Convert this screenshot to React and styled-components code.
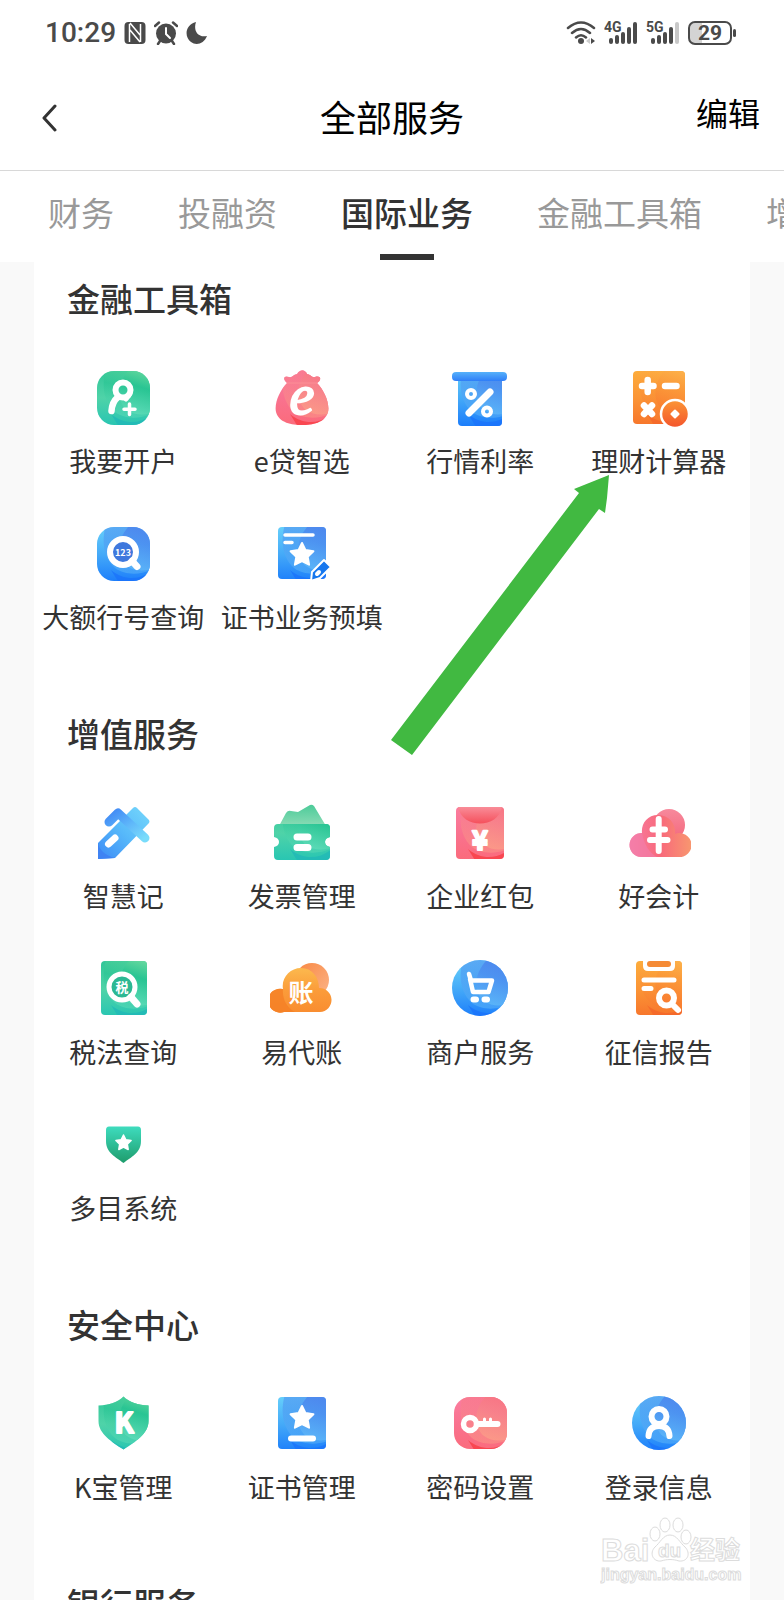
import React from 'react'
import styled, { createGlobalStyle } from 'styled-components'

const IconText = styled.text`
    fill: #fff;
    stroke: #fff;
    stroke-width: ${({ $thick }) => ($thick ? 2 : 0)}px;
    stroke-linejoin: round;
    font-family: ${({ $serif }) => ($serif ? '"Liberation Serif", serif' : '"Noto Sans CJK SC", sans-serif')};
    font-size: ${({ $size }) => $size}px;
    font-style: ${({ $serif }) => ($serif ? 'italic' : 'normal')};
    font-weight: ${({ $serif }) => ($serif ? 400 : 700)};
    text-anchor: middle;
`

const star = (cx, cy, r) =>
    Array.from({ length: 10 }, (_, i) => {
        const d = i % 2 ? r * 0.5 : r
        const a = (Math.PI / 5) * i - Math.PI / 2
        return `${(cx + d * Math.cos(a)).toFixed(1)},${(cy + d * Math.sin(a)).toFixed(1)}`
    }).join(' ')

function Fade({ id, stops, x1 = 0, y1 = 0, x2 = 0, y2 = 1 }) {
    return (
        <linearGradient id={id} x1={x1} y1={y1} x2={x2} y2={y2}>
            {stops.map((color, i) => (
                <stop key={i} offset={i / (stops.length - 1)} stopColor={color} />
            ))}
        </linearGradient>
    )
}

const tones = {
    green: { base: ['#2cc495', '#4fd3a8', '#22c3b4'], glow: ['#8fe6a6', '#25c391', '#5fdcb8'], low: '#20b6b8' },
    blue: { base: ['#6cd6fb', '#45aaf8', '#1677fb'], glow: ['#4a76ea', '#4c8ff0', '#5fb8f8'], low: '#1a70fb' },
    pink: { base: ['#fb7fa2', '#f9728f', '#fb6a78'], glow: ['#f86b7c', '#f7828a', '#fb9d88'], low: '#f8383f' },
    orange: { base: ['#fdb03c', '#fb9536', '#f6702a'], glow: ['#fdbe55', '#fb9a3a', '#f97b30'], low: '#f4642a' },
}

// Coloured body with the large glow circle and the darker lower corner
function Body({ id, tone, shape }) {
    const t = tones[tone]
    return (
        <>
            <defs>
                <Fade id={`${id}-base`} stops={t.base} />
                <Fade id={`${id}-glow`} stops={t.glow} x1={0.7} x2={0.5} />
                <clipPath id={`${id}-clip`}>{shape}</clipPath>
            </defs>
            <g clipPath={`url(#${id}-clip)`}>
                <rect width="64" height="64" fill={`url(#${id}-base)`} />
                <path d="M20 48C34 60 52 58 64 46V64H30Z" fill={t.low} opacity="0.7" />
                <path d="M18 -6C10 12 10 34 24 46C36 55 54 52 64 46V-6Z" fill={`url(#${id}-glow)`} opacity="0.5" />
                <path d="M42 0C26 14 24 34 36 44C44 50 56 49 64 46V-6Z" fill={`url(#${id}-glow)`} opacity="0.8" />
            </g>
        </>
    )
}

const Lines = ({ w = 6, children }) => (
    <g fill="none" stroke="#fff" strokeWidth={w} strokeLinecap="round" strokeLinejoin="round">
        {children}
    </g>
)

const shield = <path d="M32.5 4.5C38 10 47 13 57.5 13.5V29C57.5 42 44 50 32.5 57.5C21 50 7.5 42 7.5 29V13.5C18 13 27 10 32.5 4.5Z" />
const squircle = <rect x="6" y="5" width="53" height="54" rx="17" />
const paper = <rect x="8" y="5" width="48" height="52" rx="4" />

const icons = {
    account: (
        <>
            <Body id="account" tone="green" shape={squircle} />
            <Lines>
                <circle cx="32" cy="24" r="7.5" />
                <path d="M27 31Q21 36 20.5 45" strokeWidth="6.5" />
                <path d="M38 29L35 33" strokeWidth="5" />
                <path d="M38.5 38V48.5M33 43.3H44" strokeWidth="3.5" />
            </Lines>
        </>
    ),
    bag: (
        <>
            <Body
                id="bag"
                tone="pink"
                shape={<path d="M17 17C12 13 14 9 19 11C22 12 24 8 27 8C30 3 35 3 37 8C40 8 42 12 45 11C51 9 52 14 47 17C54 24 60 37 58 46C55 57 42 59 32 59C22 59 9 57 6 46C4 37 10 24 17 17Z" />}
            />
            <path d="M17 17H47" stroke="#fb8f96" strokeWidth="1" />
            <IconText x="32" y="48" $size={56} $serif $thick>e</IconText>
        </>
    ),
    rate: (
        <>
            <Body id="rate" tone="blue" shape={<rect x="10" y="11" width="44" height="49" rx="4" />} />
            <defs><Fade id="rate-bar" stops={['#56b1fa', '#2f7ef8']} /></defs>
            <rect x="4" y="6" width="55" height="9" rx="4" fill="url(#rate-bar)" />
            <Lines>
                <path d="M21 47L42 26" strokeWidth="7" />
                <circle cx="23" cy="28" r="4" strokeWidth="4" />
                <circle cx="39" cy="45.5" r="4" strokeWidth="4" />
            </Lines>
        </>
    ),
    calculator: (
        <>
            <Body id="calc" tone="orange" shape={<rect x="6" y="5" width="52" height="53" rx="4" />} />
            <Lines w={6.5}>
                <path d="M20.7 14V26M15 20H26.5M38 20H49.5M17 39.5L25 48M25 39.5L17 48" />
            </Lines>
            <defs><Fade id="calc-coin" stops={['#fb9636', '#f4542c']} /></defs>
            <circle cx="48" cy="48" r="14" fill="url(#calc-coin)" stroke="#fff" strokeWidth="2.5" />
            <rect x="44.5" y="44.5" width="7" height="7" rx="1" fill="#fff" transform="rotate(45 48 48)" />
        </>
    ),
    bankNo: (
        <>
            <Body id="bankno" tone="blue" shape={squircle} />
            <circle cx="32" cy="30" r="11" fill="#3f78dd" />
            <Lines>
                <circle cx="32" cy="30" r="13" />
                <path d="M41 39L46 44.5" strokeWidth="7" />
            </Lines>
            <IconText x="32" y="33.5" $size={9}>123</IconText>
        </>
    ),
    prefill: (
        <>
            <Body id="prefill" tone="blue" shape={paper} />
            <Lines w={3.5}>
                <path d="M15 13H43M15 20.5H22" />
            </Lines>
            <polygon points={star(32, 33, 12)} fill="#fff" stroke="#fff" strokeWidth="2" strokeLinejoin="round" />
            <path d="M41 59L42 50L54 38L61 45L50 56Z" fill="#1677ee" stroke="#fff" strokeWidth="2" strokeLinejoin="round" />
            <path d="M47 52L49 50" stroke="#fff" strokeWidth="4" strokeLinecap="round" />
        </>
    ),
    pen: (
        <>
            <defs>
                <Fade id="pen-body" stops={['#76d8fb', '#57b9fa', '#3c8af6']} x1={1} x2={0} />
                <Fade id="pen-bar" stops={['#428bf5', '#5eb6fa', '#79dcfb']} x2={1} />
            </defs>
            <path d="M7 58V42L42 7Q44 5 46 7L58 19Q59 21 58 22L24 57Z" fill="url(#pen-body)" />
            <path d="M18 21L27 12L54 37" fill="none" stroke="url(#pen-bar)" strokeWidth="9" strokeLinecap="round" strokeLinejoin="round" />
            <path d="M7 58V42Q9 53 24 57Z" fill="#3f83f3" />
            <Lines w={7}><path d="M17.5 43L24 37" /></Lines>
        </>
    ),
    invoice: (
        <>
            <defs><Fade id="inv-roof" stops={['#4ccb99', '#8adbb5']} /></defs>
            <path d="M9 25L16 12Q18 9 21 10L28 11L40 4Q42 3 44 5L56 25Z" fill="url(#inv-roof)" />
            <Body
                id="inv"
                tone="green"
                shape={<path d="M8 23H56Q60 23 60 27V36Q55 37 55 41Q55 45 60 46V55Q60 59 56 59H8Q4 59 4 55V46Q9 45 9 41Q9 37 4 36V27Q4 23 8 23Z" />}
            />
            <Lines w={7}><path d="M27 36H38M27 46.5H38" /></Lines>
        </>
    ),
    redPacket: (
        <>
            <Body id="packet" tone="pink" shape={<rect x="8" y="6" width="48" height="52" rx="4" />} />
            <defs><Fade id="packet-flap" stops={['#f98c98', '#f5505c']} /></defs>
            <path d="M10 6H54C50 28 14 28 10 6Z" fill="url(#packet-flap)" />
            <IconText x="32" y="49" $size={27} $thick>¥</IconText>
        </>
    ),
    ledger: (
        <>
            <defs>
                <Fade id="ledger-base" stops={['#f77da2', '#f8697b', '#f8976f']} x2={1} y2={0} />
                <Fade id="ledger-back" stops={['#f7899c', '#f4687c']} />
            </defs>
            <circle cx="42" cy="24" r="16" fill="url(#ledger-back)" />
            <path d="M14 56A12 12 0 1 1 15 32C14 23 20 14 31 14C43 14 49 24 48 33A12 12 0 1 1 51 56Z" fill="url(#ledger-base)" />
            <path d="M14 56A12 12 0 1 1 15 32C17 43 22 52 30 56Z" fill="#f27fae" opacity="0.6" />
            <Lines>
                <path d="M31.7 18V50M25.5 28.5H38M23 39H40.5" />
            </Lines>
        </>
    ),
    tax: (
        <>
            <Body id="tax" tone="green" shape={<rect x="10" y="4" width="46" height="54" rx="4" />} />
            <circle cx="31" cy="30" r="11" fill="#2cb893" />
            <Lines>
                <circle cx="31" cy="30" r="13" strokeWidth="5" />
                <path d="M40 40L46 47" strokeWidth="7" />
            </Lines>
            <IconText x="31" y="35" $size={13}>税</IconText>
        </>
    ),
    agent: (
        <>
            <defs>
                <Fade id="agent-base" stops={['#fcb94e', '#fb9c3a', '#f98d30']} />
                <Fade id="agent-back" stops={['#f98741', '#fbb58a']} x2={1} />
            </defs>
            <circle cx="42" cy="23" r="17" fill="url(#agent-back)" />
            <path d="M14 55A12 12 0 1 1 13 32C11 21 20 11 31 11C42 11 49 20 49 31A12 12 0 1 1 50 55Z" fill="url(#agent-base)" />
            <path d="M14 55A12 12 0 1 1 13 32C12 42 17 51 25 55Z" fill="#f58026" opacity="0.8" />
            <IconText x="31" y="45" $size={25}>账</IconText>
        </>
    ),
    cart: (
        <>
            <Body id="cart" tone="blue" shape={<circle cx="32" cy="31" r="28" />} />
            <Lines w={4.5}>
                <path d="M21 17L23 23.5H44L40.5 35H25L22 22" />
            </Lines>
            <Lines><path d="M25.5 42.5H28M36.5 42.5H39" /></Lines>
        </>
    ),
    credit: (
        <>
            <Body id="credit" tone="orange" shape={<rect x="9" y="4" width="46" height="54" rx="4" />} />
            <path d="M16 4V9Q16 14 21 14H43Q48 14 48 9V4Z" fill="#fff" />
            <rect x="20" y="4" width="24" height="6" rx="3" fill="#f58a35" />
            <Lines w={5}>
                <path d="M17 23H47M17 31.5H24" />
            </Lines>
            <Lines>
                <circle cx="39.5" cy="41" r="7.5" />
                <path d="M45 47L51 53" />
            </Lines>
        </>
    ),
    multi: (
        <>
            <defs><Fade id="multi-base" stops={['#3edcbe', '#1e9c6c']} /></defs>
            <path d="M18 13.5H47Q50 13.5 50 17V28C50 40 40 44 32.5 50C25 44 15 40 15 28V17Q15 13.5 18 13.5Z" fill="url(#multi-base)" />
            <polygon points={star(32.5, 30, 8)} fill="#fff" stroke="#fff" strokeWidth="1.5" strokeLinejoin="round" />
        </>
    ),
    kbao: (
        <>
            <Body id="kbao" tone="green" shape={shield} />
            <IconText x="33" y="41" $size={28} $thick>K</IconText>
        </>
    ),
    cert: (
        <>
            <Body id="cert" tone="blue" shape={paper} />
            <polygon points={star(32, 26, 12)} fill="#fff" stroke="#fff" strokeWidth="2" strokeLinejoin="round" />
            <Lines><path d="M21 46.5H43" /></Lines>
        </>
    ),
    password: (
        <>
            <Body id="pwd" tone="pink" shape={<rect x="6" y="5" width="53" height="52" rx="16" />} />
            <Lines>
                <circle cx="22" cy="32" r="6.5" strokeWidth="5.5" />
                <path d="M30 32H49.5" />
                <path d="M36.5 31V27M42.5 31V27" strokeWidth="3" />
            </Lines>
        </>
    ),
    login: (
        <>
            <Body id="login" tone="blue" shape={<circle cx="32" cy="31" r="27" />} />
            <Lines>
                <circle cx="32" cy="24.5" r="7.5" />
                <path d="M21.5 44Q22 34 32 34Q42 34 42.5 44" />
            </Lines>
        </>
    ),
}

const tabs = ['财务', '投融资', '国际业务', '金融工具箱', '增值服务']

const sections = [
    {
        title: '金融工具箱',
        items: [
            ['我要开户', 'account'],
            ['e贷智选', 'bag'],
            ['行情利率', 'rate'],
            ['理财计算器', 'calculator'],
            ['大额行号查询', 'bankNo'],
            ['证书业务预填', 'prefill'],
        ],
    },
    {
        title: '增值服务',
        items: [
            ['智慧记', 'pen'],
            ['发票管理', 'invoice'],
            ['企业红包', 'redPacket'],
            ['好会计', 'ledger'],
            ['税法查询', 'tax'],
            ['易代账', 'agent'],
            ['商户服务', 'cart'],
            ['征信报告', 'credit'],
            ['多目系统', 'multi'],
        ],
    },
    {
        title: '安全中心',
        items: [
            ['K宝管理', 'kbao'],
            ['证书管理', 'cert'],
            ['密码设置', 'password'],
            ['登录信息', 'login'],
        ],
    },
    { title: '银行服务', items: [] },
]

function Signal({ label, weak }) {
    return (
        <svg width="34" height="24" viewBox="0 0 34 24" fill="#4a4a4a">
            <SignalText x="0" y="11">{label}</SignalText>
            <rect x="5" y="17" width="4" height="6" rx="2" />
            <rect x="11" y="14" width="4" height="9" rx="2" />
            <rect x="17" y="11" width="4" height="12" rx="2" />
            <rect x="23" y="6" width="4" height="17" rx="2" />
            <rect x="29" y="1" width="4" height="22" rx="2" fill={weak ? '#c8c8c8' : '#4a4a4a'} />
        </svg>
    )
}

function StatusBar() {
    return (
        <Status>
            <StatusGroup>
                <Clock>10:29</Clock>
                <svg width="22" height="24" viewBox="0 0 22 24">
                    <rect x="0.5" y="1" width="21" height="22" rx="4" fill="#4a4a4a" />
                    <path d="M5.5 21V3M16.5 21V3M6 2L16 14M6 9L16 21" fill="none" stroke="#fff" strokeWidth="1.5" />
                </svg>
                <svg width="24" height="24" viewBox="0 0 24 24">
                    <circle cx="12" cy="12.5" r="10" fill="#4a4a4a" />
                    <path d="M1 5L5 1.5M23 5L19 1.5M4 23L6 20M20 23L18 20" stroke="#4a4a4a" strokeWidth="2.5" strokeLinecap="round" />
                    <path d="M12 7V13L16 17" fill="none" stroke="#fff" strokeWidth="2" strokeLinecap="round" />
                </svg>
                <svg width="22" height="24" viewBox="0 0 22 24">
                    <path d="M10 1C7 10 12 17 21 15C18 23 10 25 5 21C-2 16 -1 4 10 1Z" fill="#4a4a4a" />
                </svg>
            </StatusGroup>
            <StatusGroup>
                <svg width="30" height="24" viewBox="0 0 30 24">
                    <path d="M2 7Q15 -4 28 7M6 12Q15 4 24 12M10 16.5Q15 12 20 16.5" fill="none" stroke="#4a4a4a" strokeWidth="2.5" strokeLinecap="round" />
                    <circle cx="15" cy="20" r="3" fill="#4a4a4a" />
                    <path d="M24 17L20 20L24 23Z" fill="#ccc" />
                    <path d="M25 17L29 20L25 23Z" fill="#4a4a4a" />
                </svg>
                <Signal label="4G" />
                <Signal label="5G" weak />
                <Battery>29</Battery>
            </StatusGroup>
        </Status>
    )
}

function App() {
    return (
        <Page>
            <GlobalStyle />
            <StatusBar />
            <TitleBar>
                <BackButton aria-label="返回">
                    <svg width="18" height="28" viewBox="0 0 18 28">
                        <path d="M15 2L4 14L15 26" fill="none" stroke="#333" strokeWidth="3" strokeLinecap="round" strokeLinejoin="round" />
                    </svg>
                </BackButton>
                <Title>全部服务</Title>
                <EditButton>编辑</EditButton>
            </TitleBar>
            <TabBar>
                {tabs.map((name) => (
                    <Tab key={name} $active={name === '国际业务'}>{name}</Tab>
                ))}
            </TabBar>
            <Content>
                <Card>
                    {sections.map(({ title, items }) => (
                        <section key={title}>
                            <SectionTitle>{title}</SectionTitle>
                            <ServiceGrid>
                                {items.map(([name, icon]) => (
                                    <Service key={name} href="#">
                                        <svg width="64" height="64" viewBox="0 0 64 64" aria-hidden="true">{icons[icon]}</svg>
                                        <ServiceName>{name}</ServiceName>
                                    </Service>
                                ))}
                            </ServiceGrid>
                        </section>
                    ))}
                </Card>
            </Content>
            <Arrow width="220" height="284" viewBox="0 0 220 284" aria-hidden="true">
                <path d="M218 3L183 17L188 21L0 268L21 283L208 37L214 41L216 26Z" fill="#41b941" />
            </Arrow>
            <Watermark width="148" height="76" viewBox="0 0 148 76" aria-hidden="true">
                <g fill="#fff" stroke="#dcdcdc" strokeWidth="1">
                    <ellipse cx="55" cy="20" rx="5" ry="7" />
                    <ellipse cx="65" cy="11" rx="5" ry="7" />
                    <ellipse cx="78" cy="11" rx="5" ry="7" />
                    <ellipse cx="86" cy="23" rx="5" ry="7" />
                    <path d="M70 21C63 21 60 29 55 33C49 39 53 48 61 47C67 45 73 45 79 47C88 48 91 39 85 33C80 29 77 21 70 21Z" />
                    <MarkText x="1" y="47" $size={31}>Bai</MarkText>
                    <MarkText x="58" y="43" $size={19}>du</MarkText>
                    <MarkText x="90" y="45" $size={25}>经验</MarkText>
                    <MarkText x="1" y="66" $size={16}>jingyan.baidu.com</MarkText>
                </g>
            </Watermark>
        </Page>
    )
}

export default App

const GlobalStyle = createGlobalStyle`
    * {
        box-sizing: border-box;
    }

    body {
        margin: 0;
        background-color: #fff;
        color: #333;
        font-family: "Noto Sans CJK SC", sans-serif;
    }

    button {
        border: none;
        padding: 0;
        background: none;
        font-family: inherit;
        cursor: pointer;
    }

    svg {
        display: block;
        flex: none;
    }
`

const Page = styled.div`
    position: relative;
    display: flex;
    flex-direction: column;
    height: 100vh;
    overflow: hidden;
`

const Status = styled.div`
    display: flex;
    justify-content: space-between;
    align-items: center;
    flex: none;
    height: 66px;
    padding: 0 52px 0 45px;
`

const StatusGroup = styled.div`
    display: flex;
    align-items: center;
    gap: 8px;
`

const Clock = styled.span`
    color: #4a4a4a;
    font-family: Roboto, sans-serif;
    font-size: 28px;
    font-weight: 500;
    line-height: 32px;
`

const SignalText = styled.text`
    font-family: Roboto, sans-serif;
    font-size: 14px;
    font-weight: 700;
`

const Battery = styled.span`
    position: relative;
    width: 44px;
    height: 24px;
    border: 2px solid #4a4a4a;
    border-radius: 7px;
    background: linear-gradient(90deg, #d4d4d4 30%, #fff 30%);
    color: #4a4a4a;
    font-family: Roboto, sans-serif;
    font-size: 21px;
    font-weight: 700;
    line-height: 20px;
    text-align: center;

    &::after {
        content: "";
        position: absolute;
        top: 6px;
        right: -6px;
        width: 3px;
        height: 8px;
        border-radius: 2px;
        background-color: #4a4a4a;
    }
`

const TitleBar = styled.header`
    display: grid;
    grid-template-columns: 1fr auto 1fr;
    align-items: center;
    flex: none;
    height: 105px;
    padding: 0 24px 0 40px;
    border-bottom: 1px solid #d8d8d8;
`

const BackButton = styled.button`
    justify-self: start;
`

const Title = styled.h1`
    margin: 0 0 0 -16px;
    padding-bottom: 4px;
    color: #000;
    font-size: 36px;
    font-weight: 400;
    line-height: 48px;
`

const EditButton = styled.button`
    justify-self: end;
    padding-bottom: 12px;
    color: #000;
    font-size: 32px;
    line-height: 48px;
`

const TabBar = styled.nav`
    display: flex;
    gap: 64px;
    flex: none;
    height: 91px;
    padding: 17px 0 0 48px;
    overflow: hidden;
`

const Tab = styled.button`
    display: flex;
    flex-direction: column;
    align-items: center;
    flex: none;
    color: ${({ $active }) => ($active ? '#333' : '#999')};
    font-size: 33px;
    font-weight: ${({ $active }) => ($active ? 500 : 400)};
    line-height: 48px;

    &::after {
        content: "";
        width: 54px;
        height: 6px;
        margin-top: 18px;
        background-color: ${({ $active }) => ($active ? '#333' : 'transparent')};
    }
`

const Content = styled.main`
    flex: 1;
    min-height: 0;
    padding: 0 34px;
    background-color: #f9f9f9;
    overflow: hidden;
`

const Card = styled.div`
    display: flex;
    flex-direction: column;
    gap: 74px;
    padding: 12px 2px 12px 0;
    background-color: #fff;
`

const SectionTitle = styled.h2`
    margin: 0 0 44px 33px;
    font-size: 33px;
    font-weight: 500;
    line-height: 48px;
`

const ServiceGrid = styled.div`
    display: grid;
    grid-template-columns: repeat(4, 1fr);
    row-gap: 43px;
`

const Service = styled.a`
    display: flex;
    flex-direction: column;
    align-items: center;
    gap: 13px;
    color: #333;
    text-decoration: none;
`

const ServiceName = styled.span`
    font-size: 27px;
    line-height: 36px;
    white-space: nowrap;
`

const Arrow = styled.svg`
    position: absolute;
    top: 472px;
    left: 391px;
`

const Watermark = styled.svg`
    position: absolute;
    right: 36px;
    bottom: 10px;
`

const MarkText = styled.text`
    font-family: "Liberation Sans", "Noto Sans CJK SC", sans-serif;
    font-size: ${({ $size }) => $size}px;
    font-weight: 700;
`
